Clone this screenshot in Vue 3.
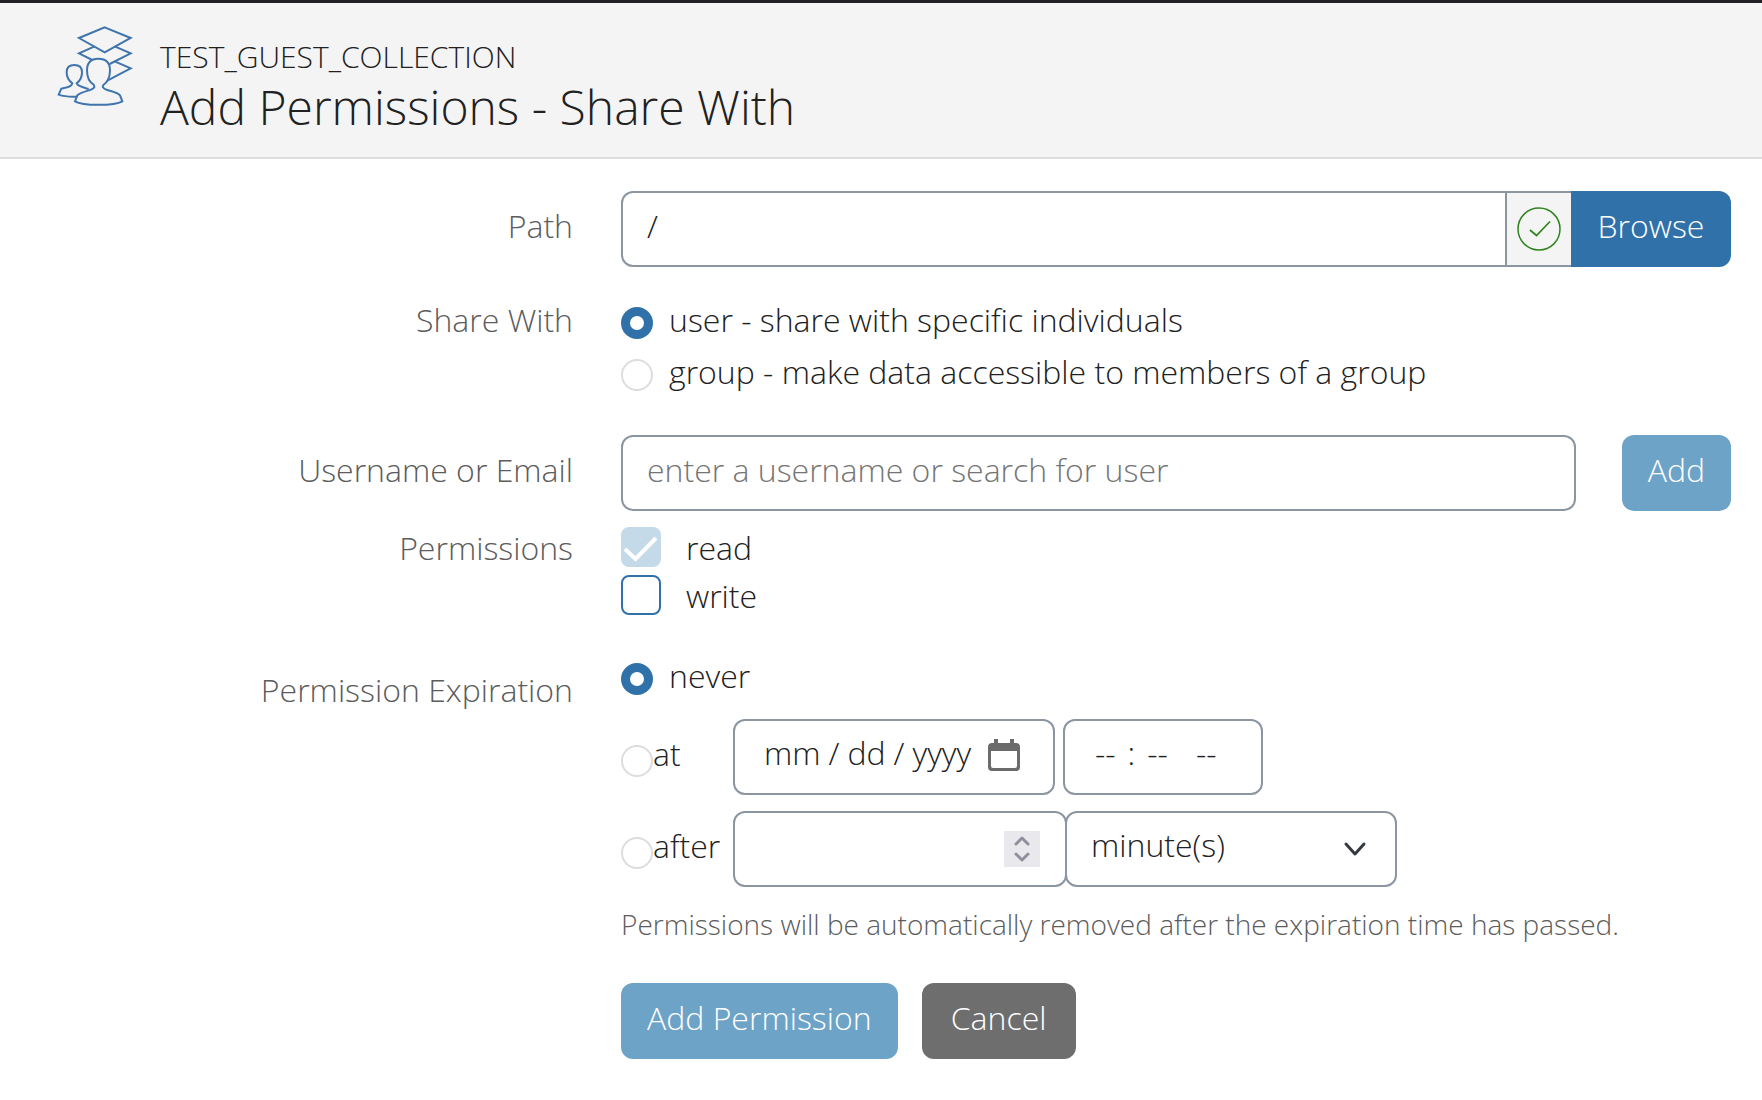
<script setup>
import { ref } from 'vue'

const path = ref('/')
const shareWith = ref('user')
const shareOptions = [
  { value: 'user', text: 'user - share with specific individuals' },
  { value: 'group', text: 'group - make data accessible to members of a group' },
]
const username = ref('')
const write = ref(false)
const expiration = ref('never')
const amount = ref('')
const unit = ref('minute(s)')
const units = ['minute(s)', 'hour(s)', 'day(s)', 'week(s)']
</script>

<template>
  <div class="page">
    <header class="banner">
      <svg class="banner-icon" viewBox="171 75 228 246" fill="none" stroke="#3f74ad" stroke-width="6" aria-hidden="true">
        <path d="M314 82 392 114 314 157 237 114Z" />
        <path d="M284 139 237 160 277 180M344 139 392 160 329 192" />
        <path d="M344 184 392 205 322 242" />
        <path d="M295 176C270 176 261 188 261 211C261 232 269 247 281 254C286 262 281 267 270 270C253 275 238 279 232 286L225 304C248 318 343 318 367 304L360 286C353 278 337 275 322 270C310 266 306 261 310 255C322 247 330 232 330 211C330 188 320 176 295 176Z" />
        <path d="M266 267C249 262 232 259 230 250C241 242 246 231 246 217C246 201 238 195 223 195C208 195 200 201 200 217C200 231 206 242 217 250C215 260 201 262 184 266L176 284C190 289 210 291 231 290" />
      </svg>
      <div>
        <p class="collection">TEST_GUEST_COLLECTION</p>
        <h1 class="title">Add Permissions - Share With</h1>
      </div>
    </header>

    <form class="form" @submit.prevent>
      <div class="row path-row">
        <label class="label boxed" for="path">Path</label>
        <div class="path-group">
          <input id="path" v-model="path" class="control path-input" type="text" />
          <span class="valid">
            <svg width="44" height="44" viewBox="0 0 44 44" fill="none" stroke="#2f8420" role="img" aria-label="valid">
              <circle cx="22" cy="22" r="21" stroke-width="1.5" />
              <path d="M13 23 19.500 28.500 33 14.500" stroke-width="1.700" />
            </svg>
          </span>
          <button class="button primary browse" type="button">Browse</button>
        </div>
      </div>

      <div class="row share-row" role="radiogroup" aria-labelledby="share-label">
        <span id="share-label" class="label">Share With</span>
        <div class="radios">
          <label v-for="o in shareOptions" :key="o.value" class="option">
            <input v-model="shareWith" class="radio" type="radio" name="share" :value="o.value" />
            {{ o.text }}
          </label>
        </div>
      </div>

      <div class="row user-row">
        <label class="label boxed" for="username">Username or Email</label>
        <div class="user-group">
          <input id="username" v-model="username" class="control" type="text" placeholder="enter a username or search for user" />
          <button class="button muted" type="button">Add</button>
        </div>
      </div>

      <div class="row permission-row" role="group" aria-labelledby="permission-label">
        <span id="permission-label" class="label">Permissions</span>
        <div class="checks">
          <label class="check-option">
            <span class="check-box">
              <input class="check" type="checkbox" checked disabled />
              <svg class="tick" width="40" height="40" viewBox="0 0 40 40" fill="none" stroke="#fff" stroke-width="4" aria-hidden="true">
                <path d="M4 22 14.500 32 35 11" />
              </svg>
            </span>
            read
          </label>
          <label class="check-option">
            <span class="check-box"><input v-model="write" class="check" type="checkbox" /></span>
            write
          </label>
        </div>
      </div>

      <div class="row" role="radiogroup" aria-labelledby="expiration-label">
        <span id="expiration-label" class="label expiration-label">Permission Expiration</span>
        <div>
          <label class="option never">
            <input v-model="expiration" class="radio" type="radio" name="expiration" value="never" />
            never
          </label>
          <div class="timing">
            <label class="timing-label">
              <input v-model="expiration" class="radio" type="radio" name="expiration" value="at" />at
            </label>
            <div class="date-field">
              <input class="control date" type="date" aria-label="Expiration date" />
              <svg class="calendar" width="32" height="32" viewBox="0 0 32 32" aria-hidden="true">
                <path fill="#6b6b6b" d="M6 0h4v4h12V0h4v4h2a4 4 0 0 1 4 4v20a4 4 0 0 1-4 4H4a4 4 0 0 1-4-4V8a4 4 0 0 1 4-4h2ZM3 12v15a2 2 0 0 0 2 2h22a2 2 0 0 0 2-2V12Z" />
              </svg>
            </div>
            <input class="control time" type="time" aria-label="Expiration time" />
          </div>
          <div class="timing">
            <label class="timing-label">
              <input v-model="expiration" class="radio" type="radio" name="expiration" value="after" />after
            </label>
            <div class="number-field">
              <input v-model="amount" class="control number" type="number" aria-label="Amount" />
              <svg class="spinner" width="36" height="36" viewBox="0 0 36 36" fill="none" stroke="#8f8f9d" stroke-width="3" stroke-linecap="round" stroke-linejoin="round" aria-hidden="true">
                <path fill="#e9e9ed" stroke="none" d="M0 0h36v36H0Z" />
                <path d="M12 13 18 7 24 13M12 23 18 29 24 23" />
              </svg>
            </div>
            <div class="unit-field">
              <select v-model="unit" class="control unit" aria-label="Unit">
                <option v-for="u in units" :key="u">{{ u }}</option>
              </select>
              <svg class="chevron" width="24" height="16" viewBox="0 0 24 16" fill="none" stroke="#343a40" stroke-width="3" stroke-linecap="round" stroke-linejoin="round" aria-hidden="true">
                <path d="M3 3 12 13 21 3" />
              </svg>
            </div>
          </div>
          <p class="help">Permissions will be automatically removed after the expiration time has passed.</p>
          <div class="actions">
            <button class="button muted" type="submit">Add Permission</button>
            <button class="button cancel" type="button">Cancel</button>
          </div>
        </div>
      </div>
    </form>
  </div>
</template>

<style>
body {
  margin: 0;
  background: #fff;
}
</style>

<style scoped>
* {
  box-sizing: border-box;
}
.page {
  border-top: 3px solid #222126;
  color: #212121;
  font-family: "Open Sans", "Noto Sans", sans-serif;
  font-size: 32px;
  font-weight: 300;
  line-height: 46px;
}
.banner {
  display: flex;
  gap: 27px;
  padding: 22px 57px 20px;
  background: #f4f4f4;
  border-bottom: 2px solid #ddd;
}
.banner-icon {
  width: 76px;
  height: 82px;
}
.collection {
  margin: 12px 0 0;
  font-size: 30px;
  line-height: 40px;
}
.title {
  margin: 0;
  font-size: 48px;
  font-weight: 300;
  line-height: 60px;
}
.form {
  padding: 32px 31px 40px 18px;
}
.row {
  display: grid;
  grid-template-columns: 1fr 2fr;
  column-gap: 48px;
}
.path-row {
  margin-bottom: 30px;
}
.share-row {
  margin-bottom: 40px;
}
.user-row {
  margin-bottom: 14px;
}
.permission-row {
  margin-bottom: 34px;
}
.label {
  color: #5c5c5c;
  text-align: right;
}
.boxed {
  padding-top: 12px;
}
.expiration-label {
  padding-top: 14px;
}
.control {
  display: block;
  width: 100%;
  height: 76px;
  margin: 0;
  padding: 0 24px 8px;
  border: 2px solid #8c96a3;
  border-radius: 12px;
  background: #fff;
  color: #212121;
  font: inherit;
  appearance: none;
}
.control::placeholder {
  color: #757575;
  opacity: 1;
}
.path-group {
  display: flex;
}
.path-input {
  flex: 1;
  min-width: 0;
  border-radius: 12px 0 0 12px;
}
.valid {
  display: flex;
  align-items: center;
  justify-content: center;
  width: 64px;
  border: solid #8c96a3;
  border-width: 2px 0;
  background: #f4f4f4;
}
.button {
  height: 76px;
  padding: 0 26px 6px;
  border: 0;
  border-radius: 12px;
  color: #fff;
  font: inherit;
  white-space: nowrap;
}
.primary {
  background: #3071a9;
}
.muted {
  background: #6ea3c8;
}
.cancel {
  min-width: 154px;
  background: #6e6e6e;
}
.browse {
  min-width: 160px;
  border-radius: 0 12px 12px 0;
}
.radios {
  display: grid;
  gap: 6px;
}
.option {
  display: flex;
  gap: 16px;
}
.radio {
  flex: none;
  width: 32px;
  height: 32px;
  margin: 10px 0 0;
  border: 2px solid #ddd;
  border-radius: 50%;
  background: #fff;
  appearance: none;
}
.radio:checked {
  border: 9px solid #3071a9;
}
.user-group {
  display: grid;
  grid-template-columns: 1fr auto;
  column-gap: 46px;
}
.checks {
  display: grid;
  gap: 2px;
}
.check-option {
  display: flex;
  gap: 25px;
}
.check-box {
  position: relative;
  width: 40px;
  height: 40px;
  margin-top: 2px;
}
.check {
  display: block;
  width: 40px;
  height: 40px;
  margin: 0;
  border: 2px solid #3071a9;
  border-radius: 8px;
  background: #fff;
  appearance: none;
}
.check:disabled {
  border-color: #c5dae9;
  background: #c5dae9;
}
.tick {
  position: absolute;
  inset: 0;
}
.never {
  margin-bottom: 20px;
}
.timing {
  display: flex;
  margin-bottom: 16px;
}
.timing-label {
  display: flex;
  width: 112px;
  padding-top: 12px;
}
.timing-label .radio {
  margin-top: 14px;
}
.date-field,
.number-field,
.unit-field {
  position: relative;
}
.date-field {
  width: 322px;
  margin-right: 8px;
}
.date {
  padding-left: 28px;
}
.date::-webkit-calendar-picker-indicator {
  width: 32px;
  height: 32px;
  margin: 0;
  padding: 0;
  opacity: 0;
}
.date::-webkit-datetime-edit-text {
  padding: 0 7px;
}
.calendar {
  position: absolute;
  right: 35px;
  top: 20px;
}
.time {
  width: 200px;
  padding: 0 16px 8px 26px;
}
.time::-webkit-calendar-picker-indicator {
  display: none;
}
.time::-webkit-datetime-edit-text {
  padding: 0 8px;
}
.time::-webkit-datetime-edit-hour-field,
.time::-webkit-datetime-edit-minute-field,
.time::-webkit-datetime-edit-ampm-field {
  padding: 0 4px;
}
.number-field {
  width: 334px;
}
.unit-field {
  width: 332px;
  margin-left: -2px;
}
.number::-webkit-inner-spin-button {
  opacity: 0;
}
.spinner {
  position: absolute;
  right: 27px;
  top: 20px;
}
.chevron {
  position: absolute;
  right: 30px;
  top: 30px;
}
.help {
  margin: 0 0 38px;
  color: #5c5c5c;
  font-size: 28px;
  line-height: 42px;
}
.actions {
  display: flex;
  gap: 24px;
}
</style>
